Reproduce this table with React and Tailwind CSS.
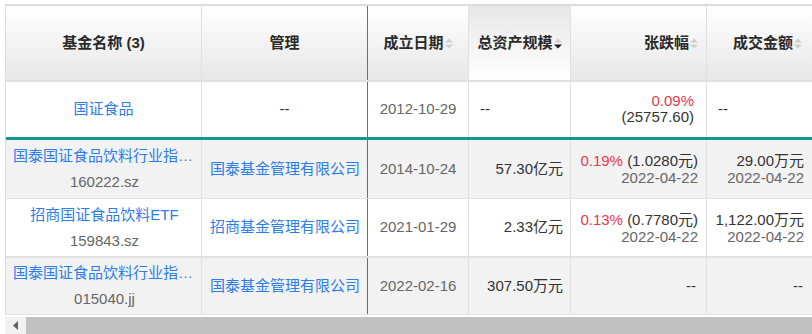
import React from "react";

const font = { fontFamily: '"Liberation Sans", "Noto Sans CJK SC", sans-serif' };

const SortIcon = ({ active }) => (
  <svg width="8" height="11" viewBox="0 0 8 11" className="ml-[1px] shrink-0">
    <polygon points="0,4.5 4,0.5 8,4.5" fill="#cfcfcf" />
    <polygon points="0,6.5 8,6.5 4,10.5" fill={active ? "#1a1a1a" : "#cfcfcf"} />
  </svg>
);

const rows = [
  {
    name: "国泰国证食品饮料行业指数分级",
    code: "160222.sz",
    company: "国泰基金管理有限公司",
    date: "2014-10-24",
    size: "57.30亿元",
    pct: "0.19%",
    price: "(1.0280元)",
    pctDate: "2022-04-22",
    amount: "29.00万元",
    amountDate: "2022-04-22",
    gray: true,
    border: "border-b border-[#e3e5e8]",
    h: "h-[59px]",
  },
  {
    name: "招商国证食品饮料ETF",
    code: "159843.sz",
    company: "招商基金管理有限公司",
    date: "2021-01-29",
    size: "2.33亿元",
    pct: "0.13%",
    price: "(0.7780元)",
    pctDate: "2022-04-22",
    amount: "1,122.00万元",
    amountDate: "2022-04-22",
    gray: false,
    border: "border-b-2 border-[#dde0e4]",
    h: "h-[59px]",
  },
  {
    name: "国泰国证食品饮料行业指数(LOF)C",
    code: "015040.jj",
    company: "国泰基金管理有限公司",
    date: "2022-02-16",
    size: "307.50万元",
    gray: true,
    border: "border-b border-[#e3e5e8]",
    h: "h-[57px]",
  },
];

export default function App() {
  return (
    <div className="w-[812px] h-[334px] overflow-hidden bg-white pt-[4px] text-[15px]" style={font}>
      <div className="ml-[5px] border-t-2 border-l border-[#dcdcdc]">
        {/* header */}
        <div className="flex h-[76px] border-b-2 border-[#dde1e6] font-bold text-[#2a2a2a]">
          <div className="w-[196px] shrink-0 flex items-center justify-center border-r border-[#e0e0e0] bg-linear-to-b from-white to-[#e7e7e7]">
            基金名称 (3)
          </div>
          <div className="w-[166px] shrink-0 flex items-center justify-center border-r border-[#13968f] bg-linear-to-b from-white to-[#e7e7e7]">
            管理
          </div>
          <div className="w-[101px] shrink-0 flex items-center justify-center border-r border-[#e0e0e0] bg-linear-to-b from-white to-[#e7e7e7]">
            成立日期
            <SortIcon />
          </div>
          <div className="w-[102px] shrink-0 flex items-center justify-center border-r border-[#e0e0e0] bg-linear-to-b from-[#e7e7e7] to-white">
            总资产规模
            <SortIcon active />
          </div>
          <div className="w-[136px] shrink-0 flex items-center justify-end pr-[8px] border-r border-[#e0e0e0] bg-linear-to-b from-white to-[#e7e7e7]">
            张跌幅
            <SortIcon />
          </div>
          <div className="w-[120px] shrink-0 flex items-center justify-start pl-[26px] bg-linear-to-b from-white to-[#e7e7e7]">
            成交金额
            <SortIcon />
          </div>
        </div>

        {/* index row */}
        <div className="flex h-[58px] border-b-[3px] border-[#13968f] bg-white">
          <div className="w-[196px] shrink-0 flex items-center justify-center border-r border-[#e0e0e0] text-[#2b7de9]">
            国证食品
          </div>
          <div className="w-[166px] shrink-0 flex items-center justify-center border-r border-[#13968f] text-[#333]">
            --
          </div>
          <div className="w-[101px] shrink-0 flex items-center justify-center border-r border-[#e0e0e0] text-[#666]">
            2012-10-29
          </div>
          <div className="w-[102px] shrink-0 flex items-center pl-[11px] border-r border-[#e0e0e0] text-[#333]">
            --
          </div>
          <div className="w-[136px] shrink-0 flex flex-col justify-center items-end pr-[12px] pb-[1px] border-r border-[#e0e0e0] leading-[16px]">
            <span className="text-[#e8384c]">0.09%</span>
            <span className="text-[#333]">(25757.60)</span>
          </div>
          <div className="w-[105px] shrink-0 flex items-center pl-[11px] text-[#333]">--</div>
        </div>

        {rows.map((r) => (
          <div key={r.code} className={`flex ${r.h} ${r.border} ${r.gray ? "bg-[#f2f2f2]" : "bg-white"}`}>
            <div className="w-[196px] shrink-0 flex flex-col justify-center pl-[7px] pr-[5px] border-r border-[#e0e0e0] text-center leading-[26px]">
              <span className="truncate text-[#2b7de9]">{r.name}</span>
              <span className="text-[#666]">{r.code}</span>
            </div>
            <div className="w-[166px] shrink-0 flex items-center pl-[8px] border-r border-[#13968f] text-[#2b7de9]">
              {r.company}
            </div>
            <div className="w-[101px] shrink-0 flex items-center justify-center border-r border-[#e0e0e0] text-[#666]">
              {r.date}
            </div>
            <div className="w-[102px] shrink-0 flex items-center justify-end pr-[7px] border-r border-[#e0e0e0] text-[#333]">
              {r.size}
            </div>
            {r.pct ? (
              <div className="w-[136px] shrink-0 flex flex-col justify-center items-end pr-[8px] border-r border-[#e0e0e0] leading-[17px]">
                <span>
                  <span className="text-[#e8384c]">{r.pct}</span>{" "}
                  <span className="text-[#333]">{r.price}</span>
                </span>
                <span className="text-[#666]">{r.pctDate}</span>
              </div>
            ) : (
              <div className="w-[136px] shrink-0 flex items-center justify-end pr-[10px] border-r border-[#e0e0e0] text-[#333]">
                --
              </div>
            )}
            {r.amount ? (
              <div className="w-[105px] shrink-0 flex flex-col justify-center items-end pr-[8px] leading-[17px] whitespace-nowrap">
                <span className="text-[#333]">{r.amount}</span>
                <span className="text-[#666]">{r.amountDate}</span>
              </div>
            ) : (
              <div className="w-[105px] shrink-0 flex items-center justify-end pr-[9px] text-[#333]">--</div>
            )}
          </div>
        ))}
      </div>

      {/* horizontal scrollbar */}
      <div className="mt-[2px] ml-[5px] h-[17px] flex bg-[#f1f1f1]">
        <div className="w-[21px] shrink-0 flex items-center justify-center">
          <svg width="5" height="9" viewBox="0 0 5 9">
            <polygon points="5,0 5,9 0,4.5" fill="#606060" />
          </svg>
        </div>
        <div className="flex-1 bg-[#c1c1c1]" />
      </div>
    </div>
  );
}
